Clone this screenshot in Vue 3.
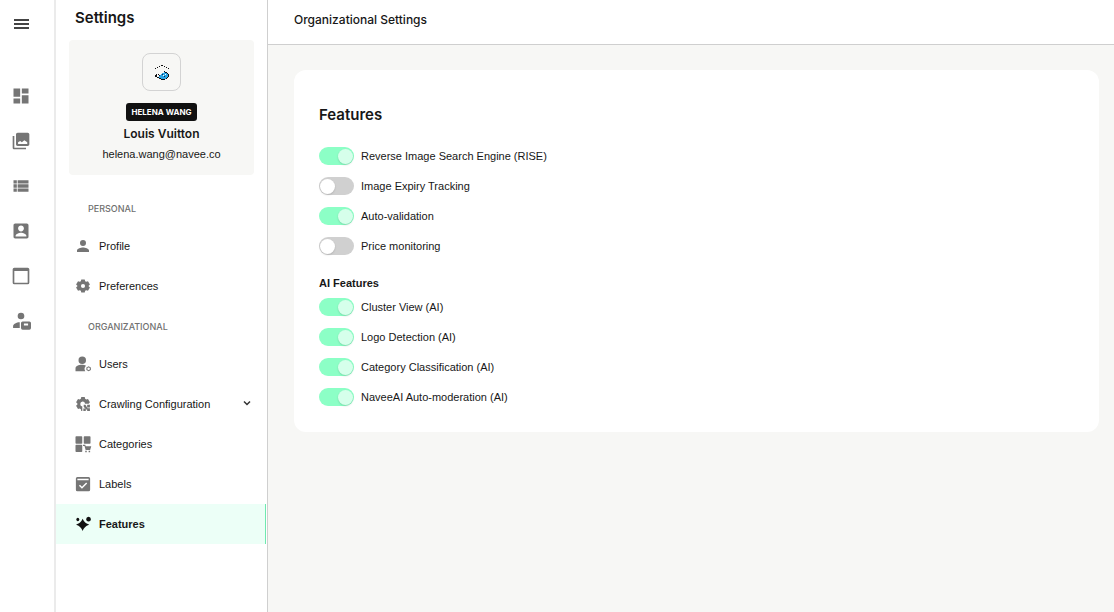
<script setup>
import { ref } from 'vue'

const railItems = [
  { label: 'Dashboard', icon: 'M3 13h8V3H3zm0 8h8v-6H3zm10 0h8V11h-8zm0-18v6h8V3z' },
  {
    label: 'Images',
    icon: 'M22 16V4c0-1.100-.9-2-2-2H8c-1.100 0-2 .9-2 2v12c0 1.100.9 2 2 2h12c1.100 0 2-.9 2-2zM8.500 15.500v-2L11 12l2 1.500 3-2.500 3.500 2.500v2zM2 6v14c0 1.100.9 2 2 2h14v-2H4V6z',
  },
  {
    label: 'List',
    icon: 'M3 14h4v-4H3zm0 5h4v-4H3zM3 9h4V5H3zm5 5h13v-4H8zm0 5h13v-4H8zM8 5v4h13V5z',
  },
  {
    label: 'Account',
    icon: 'M3 5v14c0 1.100.89 2 2 2h14c1.100 0 2-.9 2-2V5c0-1.100-.9-2-2-2H5c-1.110 0-2 .9-2 2zm12.500 4c0 1.900-1.600 3.500-3.500 3.500S8.500 10.900 8.500 9s1.600-3.500 3.500-3.500 3.500 1.600 3.500 3.500zM5.500 18c0-2.500 4-4 6.500-4s6.500 1.500 6.500 4v.5h-13z',
  },
  {
    label: 'Window',
    icon: 'M4 2h16a2 2 0 0 1 2 2v16a2 2 0 0 1-2 2H4a2 2 0 0 1-2-2V4a2 2 0 0 1 2-2zm0 4v14h16V6z',
  },
  {
    label: 'Moderators',
    icon: 'M12 2a4 4 0 1 1 0 8 4 4 0 0 1 0-8zM2.500 20.500v-2c0-3 4-5 8-5v7zM14 12.500h8a2 2 0 0 1 2 2v6a2 2 0 0 1-2 2h-8a2 2 0 0 1-2-2v-6a2 2 0 0 1 2-2zm1.500 2.500v2.500h5V15z',
  },
]

const groups = [
  {
    title: 'Personal',
    items: [
      {
        label: 'Profile',
        icon: 'M12 12a4 4 0 1 0 0-8 4 4 0 0 0 0 8zm0 2c-2.670 0-8 1.340-8 4v2h16v-2c0-2.660-5.330-4-8-4z',
      },
      {
        label: 'Preferences',
        box: '-1 -1 26 26',
        icon: 'M9.500 2.500h5l.6 2.500 1.600.9 2.500-.7L22 10l-1.900 1.600v.8L22 14l-2.800 4.800-2.500-.7-1.600.9-.6 2.500h-5L8.900 19l-1.600-.9-2.500.7L2 14l1.900-1.600v-.8L2 10l2.800-4.800 2.500.7 1.600-.9zM12 9a3 3 0 1 0 0 6 3 3 0 0 0 0-6z',
      },
    ],
  },
  {
    title: 'Organizational',
    items: [
      {
        label: 'Users',
        icon: 'M11 2a5 5 0 1 1 0 10 5 5 0 0 1 0-10zM2 21.500V18c0-3.500 4-5 8.500-5 2 0 4 .3 5.500 1.200a6 6 0 0 0-1 7.300zM19.500 15l3 1.500v3.500l-3 1.500-3-1.500v-3.500zm0 1.600a1.700 1.700 0 1 0 0 3.400 1.700 1.700 0 0 0 0-3.400z',
      },
      {
        label: 'Crawling Configuration',
        expandable: true,
        box: '-1 -1 26 26',
        icon: 'M9.500 2h5l.6 2.500 1.600.9 2.500-.7L22 9.500l-1.800 2H15a3.500 3.500 0 1 0-4 4V22H9.500l-.6-2.500-1.600-.9-2.500.7L2 14.500l1.900-1.700v-1.600L2 9.500l2.800-4.800 2.500.7 1.600-.9zM18 13h4v4h-4zM13 13h2.500l3 5H22v4h-4v-2h-1.500L13 16zM12.500 18.500H16V22h-3.500z',
      },
      {
        label: 'Categories',
        icon: 'M3 1.500h7a1 1 0 0 1 1 1v8a1 1 0 0 1-1 1H3a1 1 0 0 1-1-1v-8a1 1 0 0 1 1-1zM14 1.500h7a1 1 0 0 1 1 1v8a1 1 0 0 1-1 1h-7a1 1 0 0 1-1-1v-8a1 1 0 0 1 1-1zM3 13h7a1 1 0 0 1 1 1v7.500a1 1 0 0 1-1 1H3a1 1 0 0 1-1-1V14a1 1 0 0 1 1-1zM12 13h3l.6 2H23l-1.500 5h-6L14 14.500h-2zM15 21h2v2h-2zM19.500 21h2v2h-2z',
      },
      {
        label: 'Labels',
        icon: 'M4.500 2.500h15a2 2 0 0 1 2 2v15a2 2 0 0 1-2 2h-15a2 2 0 0 1-2-2v-15a2 2 0 0 1 2-2zM4.500 5v2h15V5zm3.500 8-1.400 1.400 4 4 7-7L16.200 10l-5.600 5.600z',
      },
      {
        label: 'Features',
        active: true,
        box: '-1 -1 26 26',
        icon: 'M11.500 4.500c2 4.500 4 6.500 9.500 8.500-5.500 2-7.500 4.300-9.500 9-2-4.700-4-7-9.500-9 5.500-2 7.500-4 9.500-8.500zM20 1.500l2.500 1L23.500 5l-1 2.500-2.500 1-2.500-1-1-2.500 1-2.500zM4.500 3l1.500.8L6.800 5.500 6 7.200 4.500 8 3 7.200 2.200 5.500 3 3.800z',
      },
    ],
  },
]

const general = ref([
  { id: 'rise', label: 'Reverse Image Search Engine (RISE)', on: true },
  { id: 'expiry', label: 'Image Expiry Tracking', on: false },
  { id: 'validation', label: 'Auto-validation', on: true },
  { id: 'price', label: 'Price monitoring', on: false },
])

const ai = ref([
  { id: 'cluster', label: 'Cluster View (AI)', on: true },
  { id: 'logo', label: 'Logo Detection (AI)', on: true },
  { id: 'category', label: 'Category Classification (AI)', on: true },
  { id: 'moderation', label: 'NaveeAI Auto-moderation (AI)', on: true },
])
</script>

<template>
  <div class="app">
    <nav class="rail" aria-label="Main">
      <button class="rail-btn burger" type="button" aria-label="Menu">
        <svg viewBox="0 0 20 20"><path d="M3 5h15v2H3zM3 9h15v2H3zM3 13h15v2H3z" /></svg>
      </button>
      <a v-for="item in railItems" :key="item.label" class="rail-btn" href="#" :aria-label="item.label">
        <svg viewBox="0 0 24 24"><path fill-rule="evenodd" :d="item.icon" /></svg>
      </a>
    </nav>

    <aside class="sidebar">
      <h1 class="title">Settings</h1>
      <section class="profile">
        <div class="avatar">
          <svg viewBox="0 0 16 18" shape-rendering="crispEdges">
            <path fill="#111" d="M1 5h1v1H1zM3 4h1v1H3zM5 3h1v1H5zM7 2h2v1H7zM10 3h1v1h-1zM12 4h1v1h-1zM14 5h1v1h-1zM10 8h1v1h-1zM11 9h2v1h-2zM4 11h1v1H4zM13 10h1v1h-1zM2 11h1v1H2zM1 12h2v2H1zM14 11h1v3h-1zM3 14h2v1H3zM13 14h1v1h-1zM12 15h1v1h-1zM5 15h2v1H5zM9 16h2v1H9zM7 16h2v1H7z" />
            <path fill="#27a4e6" d="M10 9h1v1h-1zM8 10h5v1H8zM7 11h7v1H7zM6 12h8v1H6zM5 13h9v1H5zM5 14h8v1H5zM7 15h5v1H7z" />
            <path fill="#fff" d="M3 12h1v2H3zM9 12h1v1H9zM11 11h1v1h-1z" />
            <path fill="#223" d="M5 12h1v1H5zM8 11h1v1H8zM10 13h1v1h-1z" />
          </svg>
        </div>
        <span class="badge">HELENA WANG</span>
        <strong class="org">Louis Vuitton</strong>
        <span class="email">helena.wang@navee.co</span>
      </section>

      <nav class="menu" aria-label="Settings">
        <template v-for="group in groups" :key="group.title">
          <h2 class="group">{{ group.title }}</h2>
          <a v-for="item in group.items" :key="item.label" class="item" :class="{ active: item.active }" href="#">
            <svg class="item-icon" :viewBox="item.box || '0 0 24 24'"><path fill-rule="evenodd" :d="item.icon" /></svg>
            <span>{{ item.label }}</span>
            <svg v-if="item.expandable" class="chevron" viewBox="0 0 10 10"><path d="M2 2.500 5 5.500 8 2.500" /></svg>
          </a>
        </template>
      </nav>
    </aside>

    <main class="main">
      <header class="topbar">Organizational Settings</header>
      <div class="content">
        <section class="card">
          <h2 class="card-title">Features</h2>
          <div class="switches">
            <label v-for="f in general" :key="f.id" class="row">
              <input v-model="f.on" class="switch" type="checkbox" role="switch" :name="f.id" />
              <span>{{ f.label }}</span>
            </label>
          </div>
          <h3 class="subtitle">AI Features</h3>
          <div class="switches">
            <label v-for="f in ai" :key="f.id" class="row">
              <input v-model="f.on" class="switch" type="checkbox" role="switch" :name="f.id" />
              <span>{{ f.label }}</span>
            </label>
          </div>
        </section>
      </div>
    </main>
  </div>
</template>

<style>
body {
  margin: 0;
}
</style>

<style scoped>
.app {
  display: flex;
  min-height: 100vh;
  background: #fff;
  color: #171717;
  font-family: "Liberation Sans", Arial, sans-serif;
  font-size: 11px;
  line-height: 16px;
}
h1,
h2,
h3 {
  margin: 0;
}
a {
  color: inherit;
  text-decoration: none;
}
svg {
  display: block;
}
.title,
.badge,
.org,
.group,
.topbar,
.card-title {
  font-family: Inter, "Liberation Sans", sans-serif;
}
.rail {
  box-sizing: border-box;
  flex: none;
  width: 56px;
  padding: 14px 0 0 11px;
  display: flex;
  flex-direction: column;
  gap: 25px;
  border-right: 2px solid #ebebeb;
}
.rail-btn {
  width: 20px;
  height: 20px;
  padding: 0;
  border: 0;
  background: none;
  fill: #757575;
}
.rail-btn svg {
  width: 20px;
  height: 20px;
}
.burger {
  margin-bottom: 27px;
  fill: #444;
}
.sidebar {
  flex: none;
  width: 211px;
  border-right: 1px solid #cfcfcf;
}
.title {
  padding: 8px 19px 12px;
  font-size: 15px;
  line-height: 20px;
  font-weight: 600;
}
.profile {
  margin: 0 13px;
  padding: 13px 8px;
  display: flex;
  flex-direction: column;
  align-items: center;
  background: #f7f7f5;
  border-radius: 4px;
}
.avatar {
  display: flex;
  align-items: center;
  justify-content: center;
  width: 37px;
  height: 36px;
  border: 1px solid #d3d3d3;
  border-radius: 8px;
}
.avatar svg {
  width: 16px;
  height: 18px;
}
.badge {
  margin: 12px 0 4px;
  padding: 0 6px;
  line-height: 18px;
  font-size: 8px;
  font-weight: 700;
  color: #fff;
  background: #111;
  border-radius: 3px;
}
.org {
  font-size: 12px;
  line-height: 18px;
  font-weight: 600;
}
.email {
  margin-top: 3px;
}
.menu {
  margin-top: 13px;
}
.group {
  padding: 13px 32px 9px;
  font-size: 9px;
  font-weight: 500;
  text-transform: uppercase;
  color: #707070;
}
.item {
  display: flex;
  align-items: center;
  gap: 7px;
  height: 40px;
  margin-right: 1px;
  padding: 0 14px 0 18px;
}
.item-icon {
  width: 18px;
  height: 18px;
  fill: #757575;
}
.active {
  padding-right: 13px;
  border-right: 1px solid #6fe9b0;
  background: #ecfff7;
  font-weight: 700;
}
.active .item-icon {
  fill: #111;
}
.chevron {
  width: 10px;
  height: 10px;
  margin-left: auto;
  fill: none;
  stroke: #333;
  stroke-width: 1.5;
}
.main {
  flex: 1;
  min-width: 0;
  background: #f7f7f5;
}
.topbar {
  padding: 10px 26px 14px;
  border-bottom: 1px solid #cfcfcf;
  background: #fff;
  font-size: 12px;
  line-height: 20px;
  font-weight: 500;
}
.content {
  padding: 25px 15px 24px 26px;
}
.card {
  padding: 33px 25px 26px;
  border-radius: 12px;
  background: #fff;
}
.card-title {
  margin-bottom: 20px;
  font-size: 15px;
  line-height: 24px;
  font-weight: 600;
}
.switches {
  display: flex;
  flex-direction: column;
  align-items: flex-start;
  gap: 12px;
}
.row {
  display: flex;
  align-items: center;
  gap: 7px;
  height: 18px;
}
.switch {
  appearance: none;
  box-sizing: border-box;
  width: 35px;
  height: 18px;
  margin: 0;
  padding: 1px;
  display: flex;
  align-items: center;
  border-radius: 9px;
  background: #d0d0d0;
}
.switch::before {
  content: "";
  width: 15px;
  height: 15px;
  border-radius: 50%;
  background: #fff;
  box-shadow: 0 1px 2px rgba(0, 0, 0, 0.15);
}
.switch:checked {
  justify-content: flex-end;
  background: #8cffc6;
}
.switch:checked::before {
  background: #d6ffeb;
}
.subtitle {
  margin: 20px 0 7px;
  font-size: 11px;
  line-height: 16px;
  font-weight: 700;
}
</style>
